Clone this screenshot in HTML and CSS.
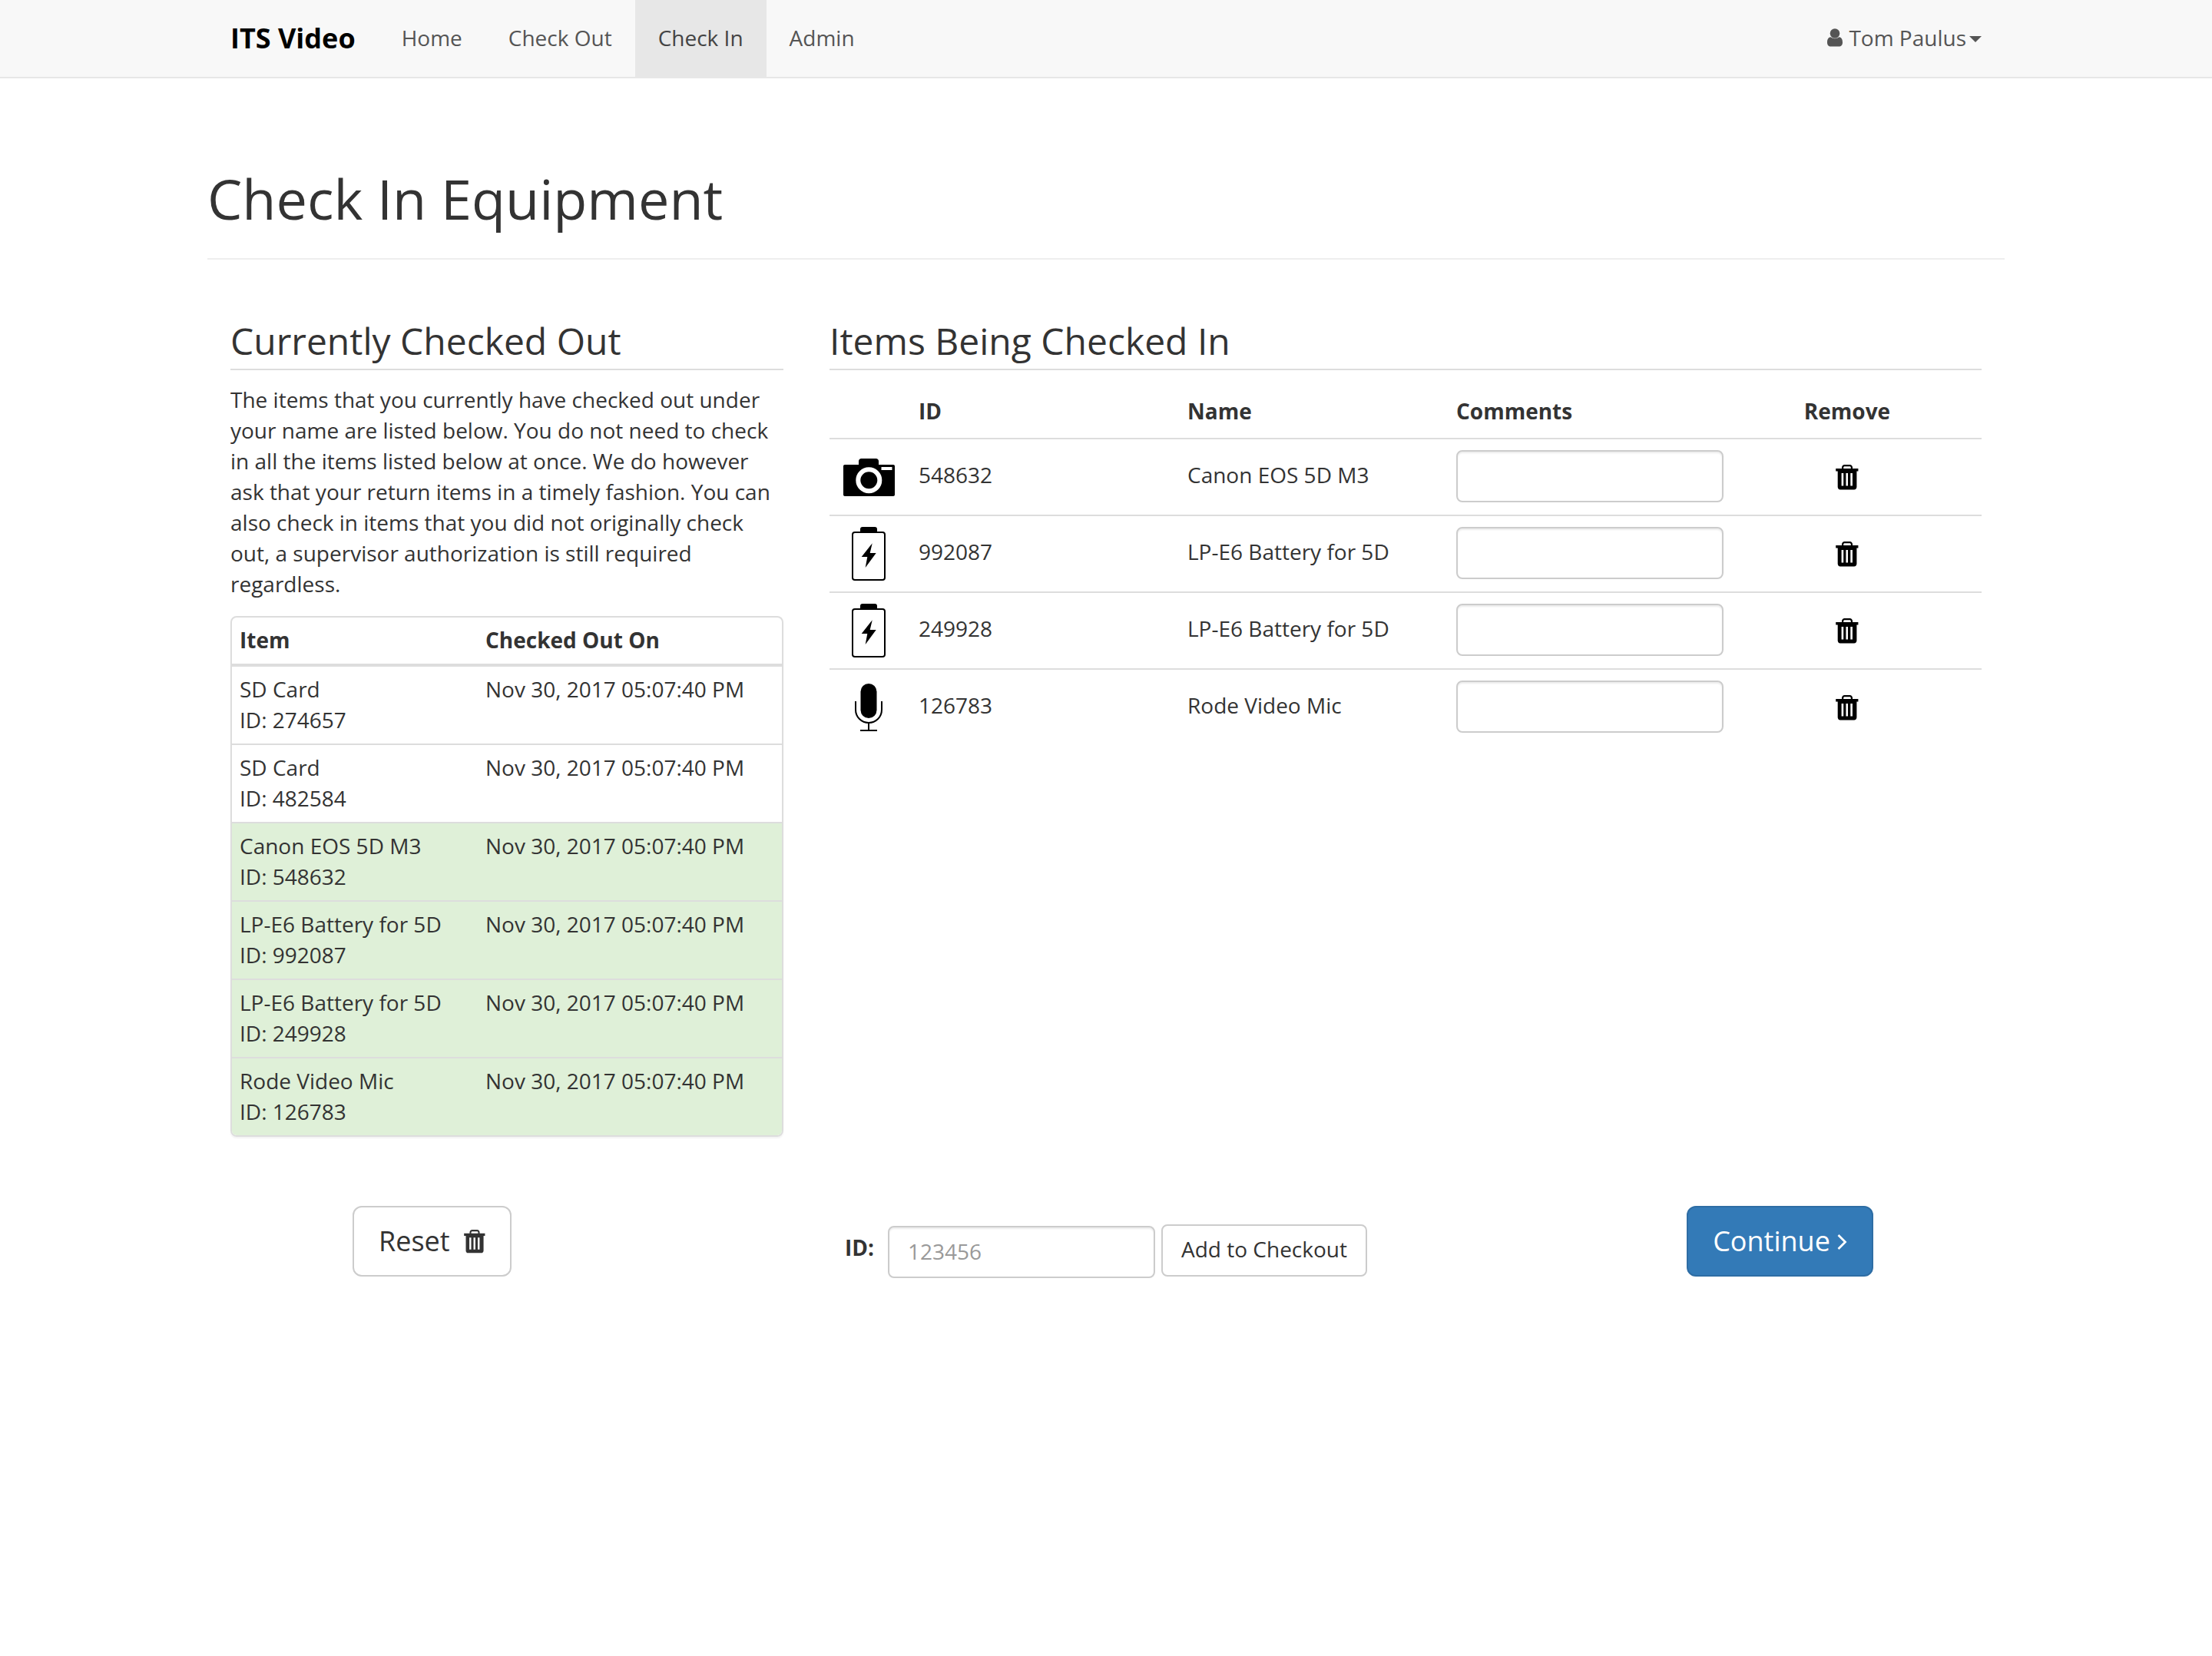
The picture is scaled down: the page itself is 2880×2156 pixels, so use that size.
FILE: index.html
```html
<!DOCTYPE html>
<html lang="en">
<head>
<meta charset="utf-8">
<title>Check In Equipment</title>
<link rel="stylesheet" href="styles.css">
</head>
<body>
<svg class="defs" aria-hidden="true">
  <symbol id="trash" viewBox="0 0 30 33">
    <path fill="currentColor" fill-rule="evenodd" d="M8 5V3.600C8 1.600 9.600 0 11.600 0h6.800C20.400 0 22 1.600 22 3.600V5h7.400v3.400h-2V29c0 2-1.400 3.400-3.400 3.400H6C4 32.400 2.700 31 2.700 29V8.400H.2V5H8zM10.200 5h9.600V3.800c0-.9-.6-1.500-1.500-1.500h-6.600c-.9 0-1.500.6-1.500 1.500V5zM7.600 11v16.400h2.600V11H7.600zm5.800 0v16.400H16V11h-2.600zm5.900 0v16.400h2.600V11h-2.600z"/>
  </symbol>
  <symbol id="battery" viewBox="0 0 44 70">
    <rect x="11" y="0" width="22" height="9" rx="3" fill="#000"/>
    <rect x="1" y="7" width="42" height="62" rx="3" fill="#fff" stroke="#000" stroke-width="2"/>
    <path fill="#000" d="M26.700 21.300 12.700 39h7.600l-2.600 14 14-19h-8z"/>
  </symbol>
</svg>

<nav class="navbar">
  <div class="nav-inner">
    <a class="brand">ITS Video</a>
    <a class="nav-link">Home</a>
    <a class="nav-link">Check Out</a>
    <a class="nav-link active">Check In</a>
    <a class="nav-link">Admin</a>
    <a class="user">
      <svg class="user-icon" viewBox="0 0 20 24"><circle cx="10" cy="6.500" r="6.300" fill="currentColor"/><path fill="currentColor" d="M4.600 11.300C6 12.600 8 13.200 10 13.200s4-.6 5.400-1.900c3 .3 4.600 2.700 4.600 6.900 0 3.300-2 5.400-4.600 5.400H4.600C2 23.600 0 21.500 0 18.200c0-4.200 1.600-6.600 4.600-6.900z"/></svg>
      <span>Tom Paulus</span><span class="caret"></span>
    </a>
  </div>
</nav>

<main class="container">
  <header class="page-header"><h1>Check In Equipment</h1></header>

  <div class="columns">
    <section class="col-left">
      <h3>Currently Checked Out</h3>
      <p>The items that you currently have checked out under your name are listed below. You do not need to check in all the items listed below at once. We do however ask that your return items in a timely fashion. You can also check in items that you did not originally check out, a supervisor authorization is still required regardless.</p>
      <div class="panel">
        <table class="out-table">
          <thead><tr><th class="out-item">Item</th><th>Checked Out On</th></tr></thead>
          <tbody>
            <tr><td>SD Card<br>ID: 274657</td><td>Nov 30, 2017 05:07:40 PM</td></tr>
            <tr><td>SD Card<br>ID: 482584</td><td>Nov 30, 2017 05:07:40 PM</td></tr>
            <tr class="success"><td>Canon EOS 5D M3<br>ID: 548632</td><td>Nov 30, 2017 05:07:40 PM</td></tr>
            <tr class="success"><td>LP-E6 Battery for 5D<br>ID: 992087</td><td>Nov 30, 2017 05:07:40 PM</td></tr>
            <tr class="success"><td>LP-E6 Battery for 5D<br>ID: 249928</td><td>Nov 30, 2017 05:07:40 PM</td></tr>
            <tr class="success"><td>Rode Video Mic<br>ID: 126783</td><td>Nov 30, 2017 05:07:40 PM</td></tr>
          </tbody>
        </table>
      </div>
    </section>

    <section class="col-right">
      <h3>Items Being Checked In</h3>
      <table class="in-table">
        <thead>
          <tr><th class="c-icon"></th><th class="c-text">ID</th><th class="c-text">Name</th><th class="c-text">Comments</th><th class="c-text center">Remove</th></tr>
        </thead>
        <tbody>
          <tr>
            <td class="icon-cell"><svg class="i-camera" viewBox="0 0 67 49"><path fill="#000" d="M20 8V3.500C20 1.500 21.500 0 23.500 0h19C44.500 0 46 1.500 46 3.500V8h19c1.200 0 2 .8 2 2v37c0 1.200-.8 2-2 2H2c-1.200 0-2-.8-2-2V10c0-1.200.8-2 2-2z"/><circle cx="33.300" cy="28.300" r="14" fill="none" stroke="#fff" stroke-width="6"/><rect x="49.500" y="11" width="14" height="4" fill="#fff"/></svg></td>
            <td>548632</td><td>Canon EOS 5D M3</td>
            <td class="comment"><input class="form-control" type="text"></td>
            <td class="center"><svg class="i-trash"><use href="#trash"/></svg></td>
          </tr>
          <tr>
            <td class="icon-cell"><svg class="i-battery"><use href="#battery"/></svg></td>
            <td>992087</td><td>LP-E6 Battery for 5D</td>
            <td class="comment"><input class="form-control" type="text"></td>
            <td class="center"><svg class="i-trash"><use href="#trash"/></svg></td>
          </tr>
          <tr>
            <td class="icon-cell"><svg class="i-battery"><use href="#battery"/></svg></td>
            <td>249928</td><td>LP-E6 Battery for 5D</td>
            <td class="comment"><input class="form-control" type="text"></td>
            <td class="center"><svg class="i-trash"><use href="#trash"/></svg></td>
          </tr>
          <tr>
            <td class="icon-cell"><svg class="i-mic" viewBox="0 0 36 62"><rect x="7.500" y="0" width="21" height="45" rx="10.500" fill="#000"/><path fill="none" stroke="#000" stroke-width="2" d="M1 23v11c0 9.500 7.500 17 17 17s17-7.500 17-17V23M18 51v10M7 61h22"/></svg></td>
            <td>126783</td><td>Rode Video Mic</td>
            <td class="comment"><input class="form-control" type="text"></td>
            <td class="center"><svg class="i-trash"><use href="#trash"/></svg></td>
          </tr>
        </tbody>
      </table>
    </section>
  </div>

  <div class="actions">
    <div class="action-col">
      <button class="btn btn-lg">Reset <svg class="i-reset"><use href="#trash"/></svg></button>
    </div>
    <div class="action-col action-mid">
      <label class="id-label">ID:</label>
      <input class="form-control id-input" type="text" placeholder="123456">
      <button class="btn btn-add">Add to Checkout</button>
    </div>
    <div class="action-col">
      <button class="btn btn-lg btn-primary">Continue<svg class="i-chevron" viewBox="0 0 13 20"><path d="M1.500 1 10.500 10 1.500 19" fill="none" stroke="currentColor" stroke-width="2.800"/></svg></button>
    </div>
  </div>
</main>
</body>
</html>
```

FILE: styles.css
```css
* { box-sizing: border-box; }
html, body { margin: 0; padding: 0; }
body {
  background: #fff;
  color: #333;
  font-family: "Open Sans", "Liberation Sans", sans-serif;
  font-size: 28px;
  line-height: 40px;
  min-height: 2156px;
}
.defs { display: none; }

/* Navbar */
.navbar {
  height: 102px;
  background: #f8f8f8;
  border-bottom: 2px solid #e7e7e7;
}
.nav-inner {
  width: 2340px;
  margin: 0 auto;
  padding: 0 30px;
  display: flex;
  align-items: stretch;
  height: 100px;
}
.brand {
  font-size: 36px;
  font-weight: 700;
  color: #000;
  line-height: 100px;
  margin-right: 30px;
}
.nav-link {
  padding: 0 30px 2px;
  line-height: 98px;
  color: #555;
}
.nav-link.active {
  background: #e7e7e7;
  color: #444;
}
.user {
  margin-left: auto;
  padding-bottom: 2px;
  display: flex;
  align-items: center;
  color: #555;
}
.user-icon { width: 20px; height: 24px; margin-right: 8px; }
.caret {
  width: 0;
  height: 0;
  margin-left: 4px;
  margin-top: 4px;
  border-top: 8px solid #555;
  border-left: 8px solid transparent;
  border-right: 8px solid transparent;
}

/* Page */
.container { width: 2340px; margin: 0 auto; }
.page-header {
  padding-top: 116px;
  padding-bottom: 38px;
  border-bottom: 2px solid #eee;
}
h1 {
  margin: 0;
  font-size: 72px;
  font-weight: 400;
  line-height: 80px;
}
.columns { display: flex; }
.col-left { width: 780px; padding: 0 30px; }
.col-right { width: 1560px; padding: 0 30px; }
h3 {
  margin: 79px 0 18px;
  padding-bottom: 10px;
  border-bottom: 2px solid #ddd;
  font-size: 48px;
  font-weight: 400;
  line-height: 53px;
}
.col-right h3 { margin-bottom: 20px; }
p { margin: 0 0 22px; }

/* Checked-out panel */
.panel {
  border: 2px solid #ddd;
  border-radius: 8px;
  overflow: hidden;
  box-shadow: 0 2px 2px rgba(0, 0, 0, .05);
}
.out-table, .in-table {
  width: 100%;
  border-collapse: separate;
  border-spacing: 0;
  table-layout: fixed;
}
.out-table th, .out-table td {
  padding: 9px 10px 11px;
  text-align: left;
  vertical-align: top;
}
.out-item { width: 320px; }
.out-table th { border-bottom: 4px solid #ddd; font-weight: 700; }
.out-table tbody tr + tr td { border-top: 2px solid #ddd; }
.success td { background: #dff0d8; }

/* Items being checked in */
.c-icon { width: 100px; }
.in-table th {
  padding: 14px 16px 14px;
  text-align: left;
  font-weight: 700;
  line-height: 38px;
}
.in-table th.c-text { padding-bottom: 16px; }
.in-table th.center, .in-table td.center { text-align: center; }
.in-table td {
  padding: 12px 16px 18px;
  border-top: 2px solid #ddd;
  vertical-align: middle;
}
.in-table .icon-cell { padding: 0 0 0 2px; text-align: center; line-height: 0; }
.in-table .comment { padding: 14px 0 16px 16px; }
.in-table td.center { padding: 14px 16px 16px; }
.form-control {
  display: block;
  width: 348px;
  height: 68px;
  padding: 11px 24px 13px;
  border: 2px solid #ccc;
  border-radius: 8px;
  background: #fff;
  color: #555;
  font: inherit;
  box-shadow: inset 0 2px 2px rgba(0, 0, 0, .075);
}
.form-control::placeholder { color: #999; opacity: 1; }
.i-camera { width: 67px; height: 49px; margin-top: 1px; }
.i-battery { width: 44px; height: 70px; }
.i-mic { width: 36px; height: 62px; }
.i-trash { display: block; width: 30px; height: 33px; margin: 2px auto 0; color: #000; }

/* Bottom actions */
.actions {
  display: grid;
  grid-template-columns: 585px 1170px 585px;
  margin-top: 90px;
}
.action-col { display: flex; justify-content: center; align-items: flex-start; }
.action-mid { padding-top: 24px; }
.btn {
  display: inline-block;
  border: 2px solid #ccc;
  background: #fff;
  color: #333;
  font-family: inherit;
  cursor: pointer;
}
.btn-lg {
  height: 92px;
  padding: 20px 32px;
  border-radius: 12px;
  font-size: 36px;
  line-height: 48px;
}
.btn-primary {
  background: #337ab7;
  border-color: #2e6da4;
  color: #fff;
}
.i-reset { width: 28px; height: 31px; margin-left: 9px; vertical-align: -3px; }
.i-chevron { width: 13px; height: 20px; margin-left: 9px; vertical-align: 2px; }
.id-label { font-weight: 700; margin-right: 18px; padding-top: 10px; }
.id-input { width: 348px; margin-top: 2px; }
.btn-add {
  height: 68px;
  margin-left: 8px;
  padding: 10px 24px 14px;
  border-radius: 8px;
  font-size: 28px;
  line-height: 40px;
}
```
